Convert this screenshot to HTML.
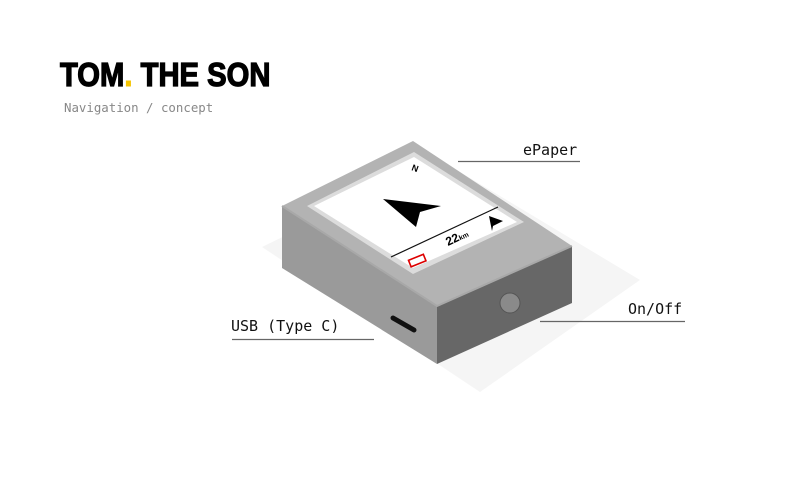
<!DOCTYPE html>
<html><head><meta charset="utf-8"><style>
html,body{margin:0;padding:0;background:#fff;width:794px;height:491px;overflow:hidden}
.t{position:absolute;left:60px;top:56px;font-family:"Liberation Sans",sans-serif;font-weight:900;font-size:33px;letter-spacing:0px;color:#000;transform:scaleX(0.885);transform-origin:left top;-webkit-text-stroke:1.3px #000}
.s{position:absolute;left:64px;top:100px;font-family:"DejaVu Sans Mono",monospace;font-size:12.4px;color:#888}
.l{position:absolute;font-family:"DejaVu Sans Mono",monospace;font-size:15px;color:#111}
</style></head><body>
<div class="t">TOM<span style="color:#f5c400;-webkit-text-stroke:1px #f5c400">.</span> THE SON</div>
<div class="s">Navigation / concept</div>
<svg width="794" height="491" style="position:absolute;left:0;top:0">
<polygon points="262,247 440,160 640,280 480,392" fill="#f5f5f5"/>
<polygon points="282,206 437,306 437,364 282,268" fill="#9a9a9a"/>
<polygon points="437,306 572,246 572,303 437,364" fill="#676767"/>
<polygon points="282,206 413,141 572,246 437,306" fill="#b3b3b3"/>
<polyline points="282,206 437,306 572,246" fill="none" stroke="#a8a8a8" stroke-width="2"/>
<polygon points="307,206 414,152 524,222 413,274" fill="#dcdcdc"/>
<polygon points="314,206 414,157 517,222 413,268" fill="#fff"/>
<line x1="391" y1="257" x2="498" y2="207" stroke="#111" stroke-width="1.2"/>
<polygon points="383,199 441,206 420,212 416,227" fill="#000"/>
<polygon points="489,216 503,221 493,226 492,231" fill="#000"/>
<text x="0" y="0" transform="translate(411,170) rotate(20)" font-family="Liberation Sans" font-weight="bold" font-size="9">N</text>
<text x="0" y="0" transform="translate(448,246) rotate(-25)" font-family="Liberation Sans" font-weight="bold" font-size="12">22<tspan font-size="7">km</tspan></text>
<g transform="translate(410,264) rotate(-22)"><rect x="0" y="-4" width="16" height="7" fill="none" stroke="#d00" stroke-width="1.6"/></g>
<circle cx="510" cy="303" r="10" fill="#8a8a8a" stroke="#555" stroke-width="1"/>
<line x1="393" y1="318" x2="414" y2="330" stroke="#111" stroke-width="5" stroke-linecap="round"/>
<line x1="458" y1="161.5" x2="580" y2="161.5" stroke="#666" stroke-width="1.3"/>
<line x1="540" y1="321.5" x2="685" y2="321.5" stroke="#666" stroke-width="1.3"/>
<line x1="232" y1="339.5" x2="374" y2="339.5" stroke="#666" stroke-width="1.3"/>
</svg>
<div class="l" style="left:523px;top:141px">ePaper</div>
<div class="l" style="left:628px;top:300px">On/Off</div>
<div class="l" style="left:231px;top:317px">USB (Type C)</div>
</body></html>
